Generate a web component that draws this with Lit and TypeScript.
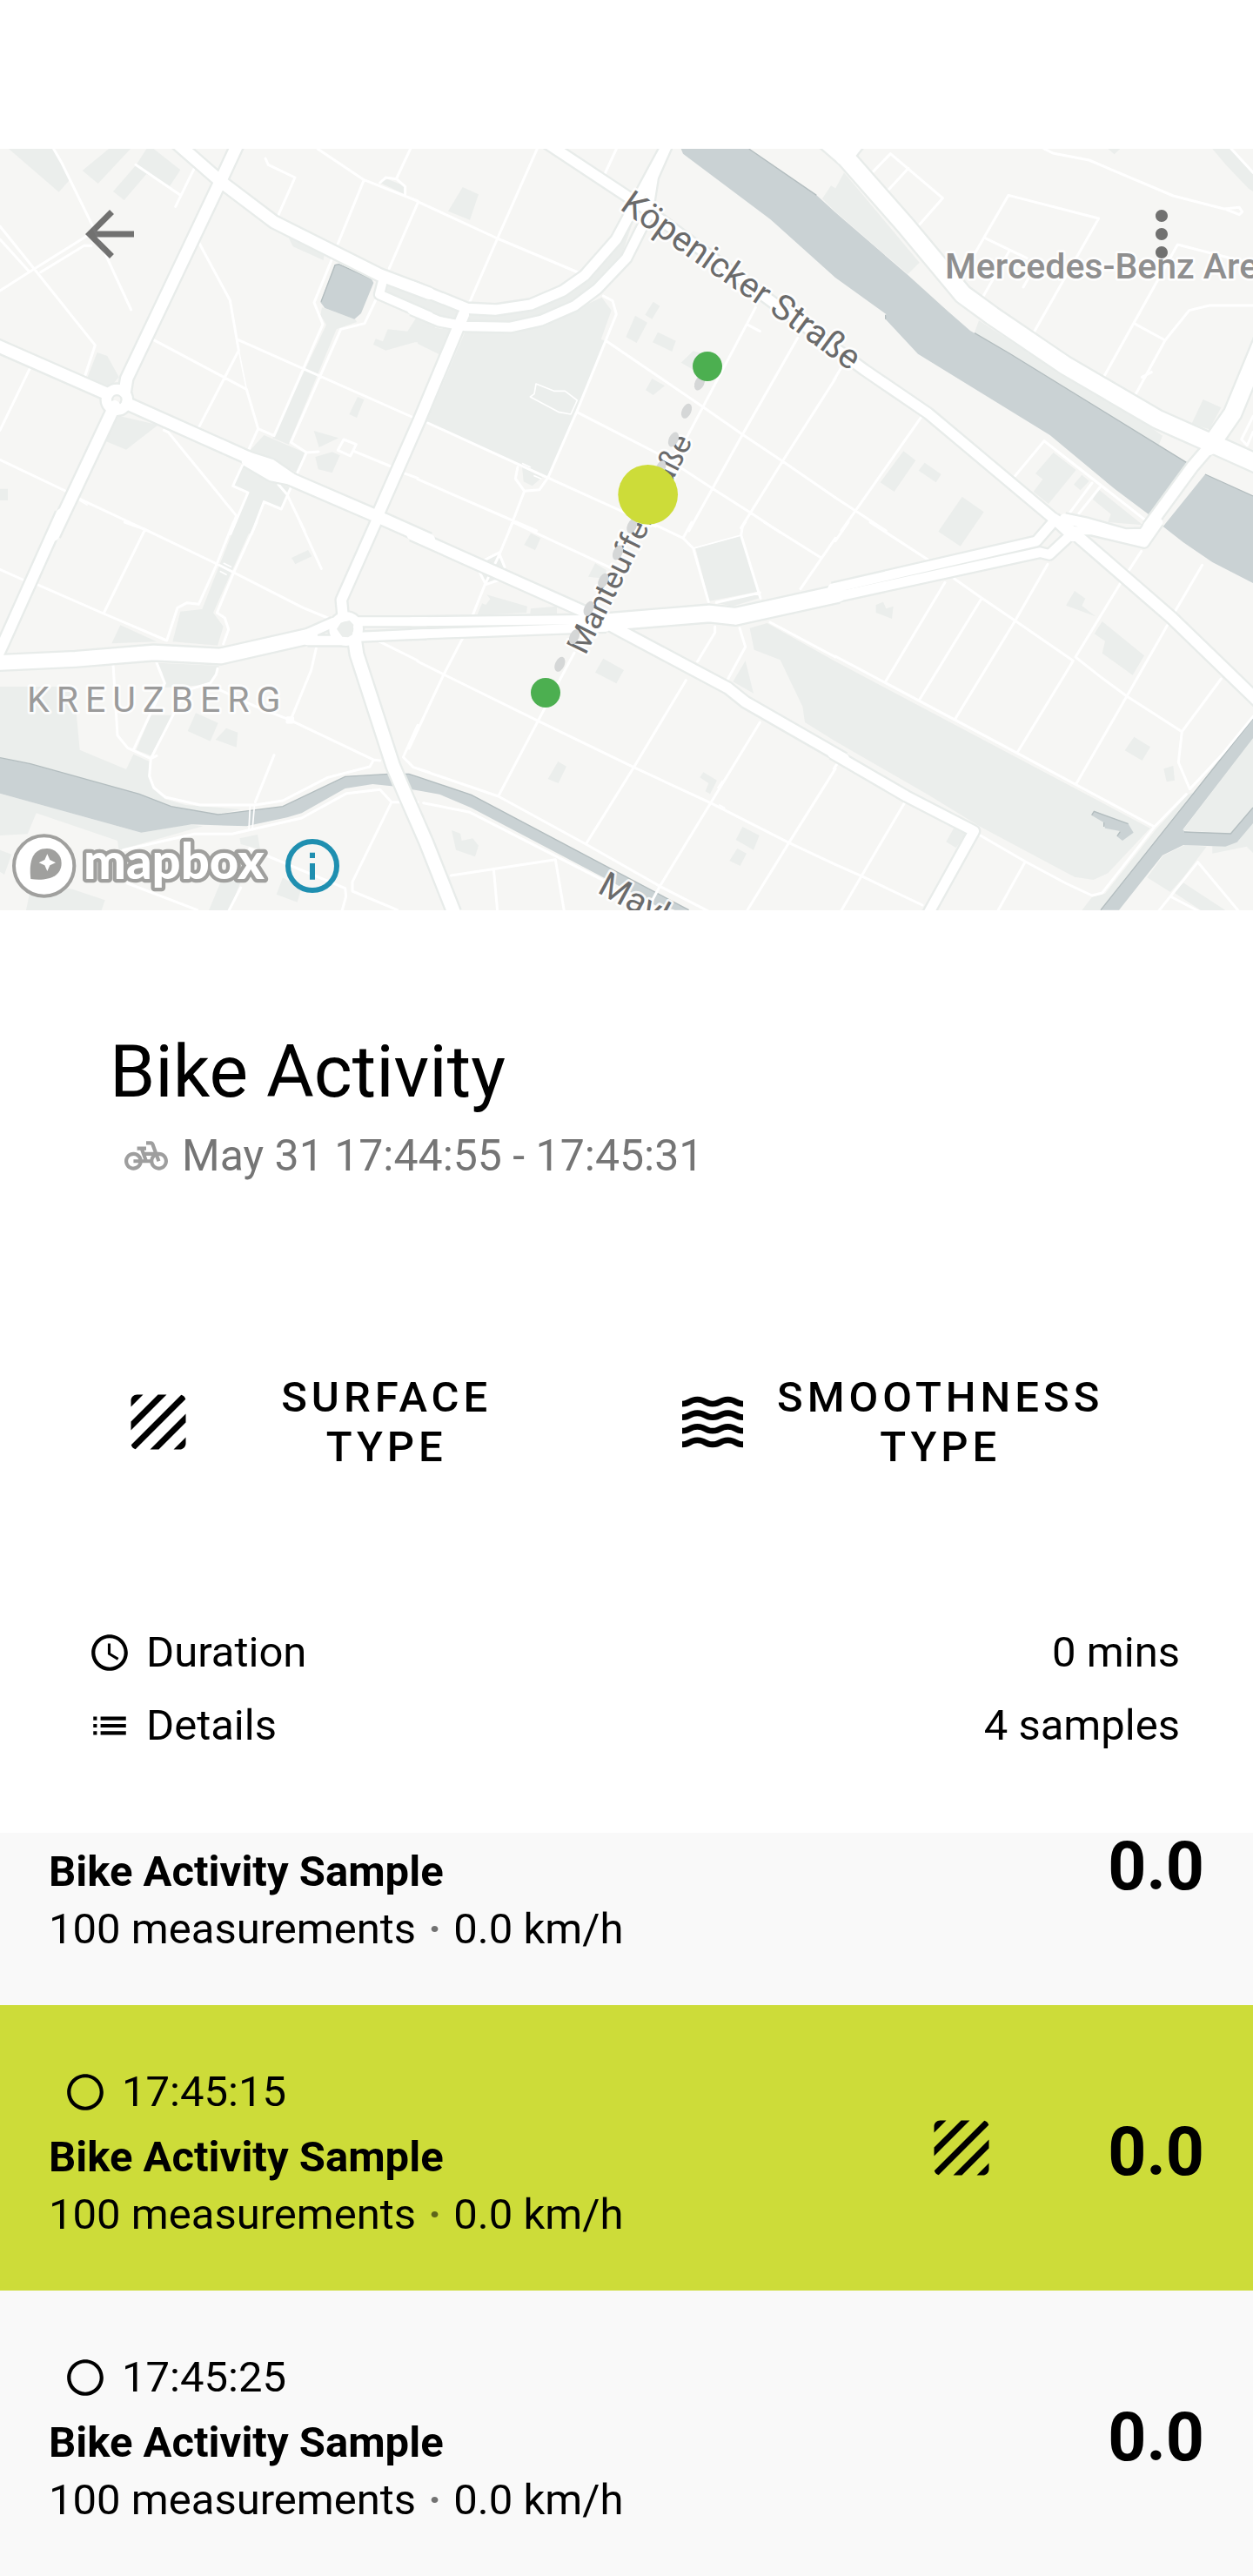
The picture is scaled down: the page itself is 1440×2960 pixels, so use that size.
import { LitElement, html, svg, css, nothing } from "lit";
import { customElement, property } from "lit/decorators.js";

/* ---------- map geometry ---------- */

type Road = [width: number, d: string];

interface Tile {
  x: number;
  y: number;
  parks: string;
  water: string;
  shore: string;
  minor: string;
  thin: string;
  major: Road[];
}

const TILES: Tile[] = [
  {
    x: 0,
    y: -33,
    parks:
      "M30,33 190,33 215,85 240,140 203,182z M375,33 450,33 338,153 284,108z M530,33 622,106 585,162 505,120 428,210 390,180 470,88 505,33z M335,735 370,747 410,820 375,860 300,825z M395,950 545,985 435,1070 350,1035z M995,340 1120,385 1115,417 1010,370z M1110,580 1225,620 1230,630 1160,655 995,1052 940,1030 1125,640 1105,605z M910,1020 1050,1080 1025,1150 940,1105 860,1075z M830,1125 860,1140 940,1180 1000,1200 970,1275 910,1250 865,1360 800,1360 855,1220 805,1195z M1340,490 1460,530 1460,585 1320,530z M1435,615 1500,615 1500,700 1430,700 1330,728 1287,708 1295,688 1320,697 1337,655 1405,662z M1233,888 1255,898 1230,960 1204,948z M1082,1005 1168,1030 1100,1062z M1087,1095 1145,1078 1172,1090 1145,1150 1097,1138z M0,1205 27,1205 27,1245 0,1245z M1310,150 1335,137 1392,160 1392,188z",
    water: "M1155,432 1168,430 1280,480 1288,495 1245,600 1222,620 1120,582 1105,562z",
    shore: "M1107,560 1155,434 1168,431 1280,481",
    minor:
      "M185,33 212,80 320,300 372,415 452,588 M0,300 118,447 328,710 292,818 M0,345 100,455 M0,522 118,447 305,330 M140,458 290,367 315,367 M468,88 622,193 M670,100 605,232 M915,66 925,88 1017,132 958,265 M1095,33 1255,140 1440,213 M1255,140 1165,360 M1415,33 1367,135 M1310,150 1330,132 1367,137 1397,163 1397,190 M1440,220 1342,445 M685,355 793,555 823,728 683,998 M850,862 890,998 945,1022 1113,638 1083,563 1145,412 M530,692 850,862 M822,692 1420,957 M1295,555 1257,635 1175,655 1003,1045 1057,1080 1098,1077 M1057,1080 1025,1150 M1185,1035 1228,1052 1208,1092 1165,1072z M1220,1075 1348,1128 M1390,1150 1440,1168 M890,998 855,1075 M103,790 0,1003 M0,1105 225,1212 M270,1238 510,1350 M565,1003 580,1010 815,1298 795,1350 M835,1125 803,1195 855,1218 795,1360 M1003,1200 970,1275 910,1250 868,1360 M960,1190 990,1225 1050,1350",
    thin: "M823,728 850,862 M275,1245 300,1260",
    major: [
      [40, "M600,5 760,145 945,285 1310,468 1480,532"],
      [30, "M1322,480 1308,535 1480,610"],
      [40, "M825,5 760,145 437,825 430,870"],
      [40, "M-20,707 370,878 M440,912 850,1095 1010,1175 1300,1300 1480,1380"],
      [34, "M850,1093 935,1120 1010,1172 M850,1110 935,1160 1010,1175"],
      [40, "M395,920 185,1365"],
      [34, "M367,898 a36,36 0 1 0 72,0 a36,36 0 1 0 -72,0z"],
    ],
  },
  {
    x: 1440,
    y: -33,
    parks:
      "M155,165 210,190 180,278 105,248z M165,660 320,665 430,640 560,580 635,545 668,590 632,690 650,695 447,1165 30,975z M0,640 125,660 75,742 0,705z M0,525 170,590 390,570 520,510 620,400 700,320 740,290 700,410 600,530 430,625 320,645 150,630 75,610 0,575z M812,560 835,575 808,620 784,605z M750,608 792,632 755,702 718,682z M828,665 890,695 877,732 810,700z M950,730 990,740 960,800 908,770z M808,825 852,850 812,882 786,865z M360,1130 430,1165 395,1195 365,1180z",
    water: "",
    shore: "",
    minor:
      "M412,33 275,342 180,560 M0,215 275,342 560,462 M685,33 645,120 M640,540 672,557 685,603 650,690 548,940 450,1165 420,1208 368,1213 337,1170 345,1130 M650,695 980,920 1120,1018 1258,1110 1440,1235 M548,940 850,1095 1015,1203 1148,1288 1250,1355 M35,978 445,1165 820,1335 M1165,580 985,920 900,1080 M1135,638 1180,662 M1310,685 1120,1018 935,1350 M1440,825 1258,1110 1115,1340 M0,1172 410,1350 M368,1213 315,1350",
    thin: "M408,843 470,868 508,868 550,900 528,948 485,940 388,888 402,878z M362,1118 388,1130 M402,1160 425,1170",
    major: [
      [34, "M440,10 780,235 1540,795 1760,945 2195,1310 2260,1370"],
      [34, "M-20,506 170,583 270,588 390,570 500,523 575,470 685,345 800,130 865,10"],
      [32, "M-20,588 75,628 165,645 320,648 425,625 540,575 620,515 720,410 790,270 812,130 865,10"],
      [38, "M158,605 5,970 -140,1300"],
    ],
  },
  {
    x: 2880,
    y: -33,
    parks:
      "M30,115 290,425 250,465 0,250 0,170z M495,625 780,810 1000,930 1128,1022 1115,1055 600,738 480,665z M1268,897 1330,925 1290,1000 1228,982z M940,33 982,33 962,52z M1300,33 1365,33 1440,120 1440,180 1425,170 1348,90z M-45,205 -15,160 10,175 10,245 0,250z M235,1075 277,1107 203,1215 155,1183z M308,1115 365,1155 347,1183 287,1142z M437,1232 512,1285 431,1403 355,1352z M752,1080 830,1140 735,1257 683,1215 715,1172 690,1152z M850,1157 875,1178 845,1210 822,1190z M905,1205 1060,1330 940,1320 950,1292 888,1242z",
    water:
      "M-532,33 -298,33 -65,193 0,252 250,468 385,590 465,660 600,738 1220,1120 1083,1295 965,1207 740,1020 285,740 173,620 175,603 0,477 -225,275 -525,50z M1275,1155 1440,1230 1440,1530 1300,1458 1200,1390 1130,1335z",
    shore: "M-298,33 -65,193 M480,668 600,738 1220,1120 M1275,1155 1440,1230 M173,605 173,620",
    minor:
      "M130,112 190,50 370,203 285,300 M252,100 180,178 M480,395 597,193 908,273 683,668 M515,340 660,410 M600,385 505,550 M665,480 648,510 M720,33 750,48 875,72 1165,195 1340,240 1393,235 1403,250 1393,260 1350,243 M925,820 1180,363 1440,430 M1030,635 1137,693 M1035,880 1137,693 1220,590 1290,573 1440,573 M1365,33 1440,115 M1440,955 1400,1035 1420,1055 1440,1010 M298,955 70,1280 20,1350 M0,1235 175,1350 M25,780 -5,830 M620,1160 720,1040 1065,1310 M885,1185 810,1285 M912,1200 840,1290 M1057,820 1090,803",
    thin: "",
    major: [
      [60, "M-60,-20 35,62 240,295 440,535 540,608 790,778 1110,965 1290,1045 1480,1130"],
      [60, "M85,-10 30,60"],
      [58, "M1510,605 1370,945 1290,1060"],
      [38, "M1290,1060 1230,1130 1080,1335"],
    ],
  },
  {
    x: 0,
    y: 1287,
    parks:
      "M0,567 255,567 275,785 435,852 460,800 515,825 512,880 530,920 570,955 640,975 830,990 752,1008 590,980 480,937 0,812z M0,935 487,1070 650,1042 700,1048 410,1130 405,1098 125,1003 95,1075 0,1080z M0,1130 40,1145 15,1215 0,1205z M90,1338 110,1240 250,1265 362,1303 350,1338z M415,355 540,412 385,418z M815,0 875,0 735,312 770,360 750,425 595,412 622,308 697,300z M1005,123 1062,96 1075,118 1018,145z M545,485 755,495 745,530 720,560 570,570 560,520z M520,665 595,665 520,805 470,785z M675,658 752,692 725,755 647,720z M780,710 820,725 815,776 743,750z M826,1090 888,1077 897,1128 830,1110z M975,1225 1038,1265 1025,1310 953,1283z M765,1230 830,1240 790,1338 720,1338z",
    water:
      "M0,812 105,833 480,937 590,980 752,1008 975,980 1190,877 1340,868 1410,868 1440,878 1625,940 2375,1337 2290,1337 2080,1225 1625,985 1515,938 1440,925 1350,910 1285,903 1190,918 1040,1003 990,1018 850,1048 660,1042 487,1070 0,935z",
    shore: "M0,812 105,833 480,937 590,980 752,1008 975,980 1190,877 1340,868 1410,868 1440,878 1625,940 2375,1337",
    minor:
      "M430,0 500,25 760,150 1045,295 1130,330 M500,25 357,315 M0,163 78,198 M128,215 357,315 575,408 612,295 645,278 685,283 745,150 805,0 M885,0 805,175 748,312 775,330 788,370 770,420 M1035,0 1108,160 M390,490 405,735 440,778 520,815 515,875 530,915 570,948 690,975 880,975 975,960 1130,880 1275,843 1288,820 M540,485 568,555 460,785 M750,505 745,525 725,555 640,580 520,815 M740,570 880,635 1000,682 1290,820 1310,822 M1090,435 1073,510 1003,680 M990,674 1010,674 1010,690 990,690z M945,803 880,965 M425,1130 670,1075 800,1075 1040,1020 1195,935 1310,922 1350,965 1440,965 M1350,965 1215,1240 1215,1272 1370,1337 M860,1125 1190,1262 1193,1290 1180,1337 M440,1245 680,1337 M830,1260 790,1337 M1440,700 1390,810 1425,845 1480,862 M1305,410 1440,477 M540,805 520,815",
    thin: "M862,980 858,1062 M877,980 870,1062 M772,142 796,154 M760,170 780,181",
    major: [
      [36, "M212,-30 8,425 -20,485"],
      [50, "M-20,485 260,472 530,450 760,462 1070,392"],
      [32, "M1060,385 1150,345 M1060,408 1200,408"],
      [34, "M1305,-20 1177,268 1182,320"],
      [30, "M1230,343 1470,343 M1240,395 1470,385"],
      [44, "M1222,400 1230,455 1355,840 1400,945 1470,1105 1565,1345"],
      [32, "M1151,368 a42,42 0 1 0 84,0 a42,42 0 1 0 -84,0z"],
    ],
  },
  {
    x: 1440,
    y: 1287,
    parks:
      "M958,90 1115,48 1172,240 1005,272z M1030,278 1172,248 1178,262 1085,290z M390,38 424,55 405,97 367,78z M612,142 650,165 650,195 588,188z M238,250 378,290 375,312 205,320 222,280 235,285 250,265z M390,298 480,290 480,315 388,315z M640,470 711,510 685,556 612,518z M1130,478 1158,590 1087,550z M484,825 513,842 485,900 449,885z M985,862 1032,890 1008,937 992,928 1003,900 973,880z M1120,1050 1178,1080 1158,1130 1097,1095z M1102,1125 1134,1142 1112,1185 1075,1167z M117,1062 147,1073 152,1098 190,1090 210,1115 198,1153 132,1130z M232,130 275,115 300,155 260,200 235,210 215,175z",
    water: "",
    shore: "",
    minor:
      "M328,0 280,115 232,215 190,320 M328,0 660,155 M232,130 280,105 300,155 M215,175 235,215 280,200 M155,400 90,525 -30,780 M0,480 90,525 415,685 745,845 1010,968 1280,1105 1440,1180 M540,450 415,685 278,945 M0,850 278,945 580,1110 835,1255 1000,1340 M925,545 745,845 580,1110 M1180,690 1010,968 835,1255 800,1320 M1440,850 1280,1105 1135,1340 M945,0 915,55 M820,10 915,55 950,90 1003,275 M1115,45 1182,262 M1115,45 1120,15 1130,0 M1030,277 1180,243 M1195,0 1390,122 M1440,55 1320,230 M1025,360 1025,380 965,480 M1110,365 1130,430 1070,540 M1215,345 1440,465 M20,968 180,1000 640,1235 M115,1218 475,1163 505,1340 M262,1195 275,1340",
    thin: "M955,89 1115,45 M1050,892 1035,915 M1040,975 1058,985",
    major: [
      [36, "M-20,43 600,320 700,375 1070,572 1130,620 1470,815"],
      [30, "M-20,343 650,335 M-20,386 160,380 650,362"],
      [56, "M640,345 1005,315 1095,325 1450,247"],
    ],
  },
  {
    x: 2880,
    y: 1287,
    parks:
      "M-295,365 -235,348 0,480 1085,1055 940,1210 890,1233 825,1223 500,1050 320,940 0,755 -105,690 -113,635 -190,475 -280,440z M165,275 175,298 200,290 195,333 140,312 140,285z M825,237 862,263 850,288 897,325 795,287z M920,342 1065,460 1025,527 920,452 930,410 893,385z M1030,740 1086,775 1058,822 998,787z M1132,850 1165,840 1170,890 1142,895z M410,1052 455,1078 415,1122 382,1102z M1440,745 1440,985 1363,1073 1198,1062z M1205,1113 1280,1118 1200,1225 1155,1275 1075,1225 1130,1150z M1200,1243 1345,1338 1260,1338 1165,1275z M1385,1103 1440,1036 1440,1140 1418,1118 1300,1142 1300,1116z M1215,940 1235,930 1100,1100 950,1290 915,1338 850,1338 885,1292 930,1280 1105,1060z",
    water:
      "M1440,675 1440,745 1198,1060 1205,1067 1363,1073 1440,983 1440,1038 1385,1103 1345,1118 1200,1113 1128,1148 978,1337 915,1337z M892,996 1010,1040 1028,1070 990,1098 970,1082 982,1065 930,1055 925,1035 883,1010z",
    shore: "M1440,677 915,1337 M1203,1068 1363,1074 1440,984 M884,1010 892,997 1010,1040 M926,1050 926,1035 M972,1082 982,1067",
    minor:
      "M45,0 0,65 M120,0 320,130 M410,195 505,262 620,340 820,478 630,790 M378,208 173,550 M505,262 290,612 M732,145 620,340 412,680 M1055,100 980,215 828,465 910,530 1005,600 1195,722 M1265,148 1170,310 M1145,355 1005,600 830,903 M1330,540 1195,722 1183,828 1222,920 1330,805 1440,670 M0,462 560,760 1100,1050 1210,938 M1100,1050 920,1278 885,1287 795,1245 655,1170 500,1080 M655,1170 560,1340 M240,965 90,1220 20,1340 M5,835 -5,850 M0,1180 90,1220 300,1320 M1250,1172 1115,1340 M1250,1172 1390,1340 M1155,1290 1260,1345",
    thin: "",
    major: [
      [32, "M-10,228 693,66 755,-5"],
      [32, "M-10,260 705,104 738,112 815,40"],
      [38, "M755,-10 820,35 1160,330 1460,620"],
      [34, "M790,-12 870,5 1000,42 1062,40 1110,-25"],
      [28, "M820,30 880,28 1065,72 1115,0"],
      [34, "M-10,797 245,945 478,1065 320,1350"],
    ],
  },
];

const at = (t: Tile) => `translate(${t.x} ${t.y})`;

/** Route dots between the two end stops, as map coordinates. */
const ROUTE: Array<[number, number]> = [
  [2412, 807],
  [2367, 904],
  [2322, 1002],
  [2278, 1100],
  [2179, 1300],
  [2130, 1392],
  [2080, 1489],
  [2030, 1585],
  [1980, 1682],
  [1930, 1777],
];

/* ---------- icons ---------- */

const WAVE =
  "M17 16.99c-1.35 0-2.2.42-2.95.8-.65.33-1.18.6-2.05.6-.9 0-1.4-.25-2.05-.6-.75-.38-1.57-.8-2.95-.8s-2.2.42-2.95.8c-.65.33-1.17.6-2.05.6v1.95c1.35 0 2.2-.42 2.95-.8.65-.33 1.17-.6 2.05-.6s1.4.25 2.05.6c.75.38 1.57.8 2.95.8s2.2-.42 2.95-.8c.65-.33 1.18-.6 2.05-.6.9 0 1.4.25 2.05.6.75.38 1.58.8 2.95.8v-1.95c-.9 0-1.4-.25-2.05-.6-.75-.38-1.6-.8-2.95-.8z";

const ICONS = {
  back: svg`<path d="M20 11H7.83l5.59-5.59L12 4l-8 8 8 8 1.41-1.41L7.83 13H20v-2z"/>`,
  more: svg`<path d="M12 8c1.1 0 2-.9 2-2s-.9-2-2-2-2 .9-2 2 .9 2 2 2zm0 2c-1.1 0-2 .9-2 2s.9 2 2 2 2-.9 2-2-.9-2-2-2zm0 6c-1.1 0-2 .9-2 2s.9 2 2 2 2-.9 2-2-.9-2-2-2z"/>`,
  bike: svg`<path d="M18.18,10l-1.7-4.68C16.19,4.53,15.44,4,14.6,4H12v2h2.6l1.46,4h-4.81l-0.36-1H12V7H7v2h1.75l1.82,5H9.9c-0.44-2.23-2.31-3.88-4.65-3.99C2.45,9.87,0,12.2,0,15c0,2.8,2.2,5,5,5c2.46,0,4.45-1.69,4.9-4h4.2c0.44,2.23,2.31,3.88,4.65,3.99c2.8,0.13,5.25-2.19,5.25-5c0-2.8-2.2-5-5-5H18.18z M7.82,16c-0.4,1.17-1.49,2-2.82,2c-1.68,0-3-1.32-3-3s1.32-3,3-3c1.33,0,2.42,0.83,2.82,2H5v2H7.82z M14.1,14h-1.4l-0.73-2H15C14.56,12.58,14.24,13.25,14.1,14z M19,18c-1.68,0-3-1.32-3-3c0-0.93,0.41-1.73,1.05-2.28l0.96,2.64l1.88-0.68l-0.97-2.67c0.03,0,0.06-0.01,0.08-0.01c1.68,0,3,1.32,3,3S20.68,18,19,18z"/>`,
  texture: svg`<path d="M19.51 3.08L3.08 19.51c.09.34.27.65.51.9.25.24.56.42.9.51L20.93 4.49c-.19-.69-.73-1.23-1.42-1.41zM11.88 3L3 11.88v2.83L14.71 3h-2.83zM5 3c-1.1 0-2 .9-2 2v2l4-4H5zm14 18c.55 0 1.05-.22 1.41-.59.37-.36.59-.86.59-1.41v-2l-4 4h2zm-9.71 0h2.83L21 12.12V9.29L9.29 21z"/>`,
  waves: svg`${[0, -4.45, -8.9, -13.35].map((dy) => svg`<path transform="translate(0 ${dy})" d=${WAVE}/>`)}`,
  clock: svg`<path d="M11.99 2C6.47 2 2 6.48 2 12s4.47 10 9.99 10C17.52 22 22 17.52 22 12S17.52 2 11.99 2zM12 20c-4.42 0-8-3.58-8-8s3.58-8 8-8 8 3.58 8 8-3.58 8-8 8zm.5-13H11v6l5.25 3.15.75-1.23-4.5-2.67z"/>`,
  list: svg`<path d="M3 13h2v-2H3v2zm0 4h2v-2H3v2zm0-8h2V7H3v2zm4 4h14v-2H7v2zm0 4h14v-2H7v2zM7 7v2h14V7H7z"/>`,
  ring: svg`<path d="M12 2C6.48 2 2 6.48 2 12s4.48 10 10 10 10-4.48 10-10S17.52 2 12 2zm0 18c-4.42 0-8-3.58-8-8s3.58-8 8-8 8 3.58 8 8-3.58 8-8 8z"/>`,
};

type IconName = keyof typeof ICONS;

@customElement("app-icon")
export class AppIcon extends LitElement {
  static styles = css`
    :host {
      display: block;
      flex: none;
      width: 50px;
      height: 50px;
    }
    :host([large]) {
      width: 84px;
      height: 84px;
    }
    .glyph {
      display: block;
      width: 100%;
      height: 100%;
      fill: currentColor;
    }
  `;

  @property() name: IconName = "ring";

  render() {
    return html`<svg class="glyph" viewBox="0 0 24 24" aria-hidden="true">${ICONS[this.name]}</svg>`;
  }
}

@customElement("activity-map")
export class ActivityMap extends LitElement {
  static styles = css`
    :host {
      display: block;
      position: relative;
    }
    .map {
      display: block;
      width: 100%;
      aspect-ratio: 1440 / 875;
      background: #f6f6f4;
    }
    .park {
      fill: #ebeeec;
    }
    .water {
      fill: #cad2d4;
    }
    .shore {
      fill: none;
      stroke: #b3bdbf;
      stroke-width: 4;
    }
    .street {
      fill: none;
      stroke: #ffffff;
      stroke-linejoin: round;
      stroke-linecap: round;
    }
    .casing {
      stroke: #e8ecea;
      stroke-linecap: butt;
    }
    .minor {
      stroke-width: 9;
    }
    .thin {
      stroke-width: 5;
    }
    .label {
      font-family: Roboto, "Liberation Sans", sans-serif;
      font-size: 120px;
      fill: #6b6b6b;
      stroke: #ffffff;
      stroke-opacity: 0.85;
      stroke-width: 16;
      stroke-linejoin: round;
      paint-order: stroke;
    }
    .narrow {
      font-size: 108px;
    }
    .place {
      font-size: 123px;
      font-weight: 500;
      fill: #8f8f8f;
    }
    .district {
      font-size: 123px;
      fill: #9b9b9b;
      letter-spacing: 24px;
    }
    .route {
      fill: #d5d7d7;
    }
    .stop {
      fill: #4caf50;
    }
    .current {
      fill: #cddc39;
    }
    .toolbar {
      position: absolute;
      inset: 0 0 auto 0;
      display: flex;
      justify-content: space-between;
      padding: 56px 63px 0 84px;
    }
    .credits {
      position: absolute;
      left: 12px;
      bottom: 12px;
      display: flex;
      align-items: center;
      gap: 16px;
    }
    .tool {
      padding: 0;
      border: 0;
      background: none;
      color: rgba(0, 0, 0, 0.54);
      cursor: pointer;
    }
    .logo {
      display: block;
      width: 300px;
      height: 78px;
    }
    .info {
      display: block;
      width: 62px;
      height: 62px;
    }
    .ink {
      fill: #a0a09e;
    }
    .disc {
      fill: #ffffff;
      stroke: #a0a09e;
      stroke-width: 12;
    }
    .spark {
      fill: #ffffff;
    }
    .wordmark {
      font-family: Lato, "Open Sans", sans-serif;
      font-weight: 900;
      font-size: 174px;
      fill: #ffffff;
      stroke: #a0a09e;
      stroke-width: 26;
      stroke-linejoin: round;
      paint-order: stroke;
    }
    .teal {
      fill: #1f8fb0;
    }
    .teal-ring {
      fill: none;
      stroke: #1f8fb0;
      stroke-width: 18;
    }
  `;

  render() {
    return html`
      <svg class="map" viewBox="0 0 4320 2625" preserveAspectRatio="xMidYMid slice" role="img" aria-label="Map">
        <defs>
          <path id="koepenicker" d="M2134,206 L2425,410 L2680,583 L3120,905" />
          <path id="manteuffel" d="M2018,1748 L2450,884" />
          <path id="maybach" d="M2056,2562 L2200,2640 L2800,2960" />
        </defs>
        ${TILES.map((t) => svg`<path class="park" transform=${at(t)} d=${t.parks} />`)}
        ${TILES.map(
          (t) => svg`<g transform=${at(t)}>
            <path class="water" d=${t.water} /><path class="shore" d=${t.shore} />
          </g>`
        )}
        ${TILES.map(
          (t) => svg`<g transform=${at(t)}>
            <path class="street minor" d=${t.minor} /><path class="street thin" d=${t.thin} />
          </g>`
        )}
        ${TILES.map((t) =>
          t.major.map(([w, d]) => svg`<path class="street casing" transform=${at(t)} d=${d} stroke-width=${w + 14} />`)
        )}
        ${TILES.map((t) =>
          t.major.map(([w, d]) => svg`<path class="street" transform=${at(t)} d=${d} stroke-width=${w} />`)
        )}
        <path class="park" d="M1161,1655 1175,1634 1205,1626 1219,1640 1215,1675 1200,1684 1180,1682z" />
        <text class="label"><textPath href="#koepenicker">Köpenicker Straße</textPath></text>
        <text class="label narrow"><textPath href="#manteuffel">Manteuffelstraße</textPath></text>
        <text class="label"><textPath href="#maybach">Maybachufer</textPath></text>
        <text class="label place" x="3258" y="447">Mercedes-Benz Arena</text>
        <text class="label district" x="93" y="1940">KREUZBERG</text>
        ${ROUTE.map(
          ([x, y]) => svg`<ellipse class="route" rx="16" ry="27" transform="translate(${x} ${y}) rotate(24)" />`
        )}
        <circle class="stop" cx="2439" cy="750" r="51" />
        <circle class="stop" cx="1881" cy="1875" r="51" />
        <circle class="current" cx="2234" cy="1192" r="103" />
      </svg>
      <div class="toolbar">
        <button class="tool" aria-label="Back"><app-icon name="back" large></app-icon></button>
        <button class="tool" aria-label="More options"><app-icon name="more" large></app-icon></button>
      </div>
      <div class="credits">
        <a href="#mapbox" aria-label="mapbox">
          <svg class="logo" viewBox="36 1068 900 234">
            <circle class="disc" cx="152" cy="1185" r="104" />
            <path class="ink" d="M106,1230 C98,1165 115,1125 162,1125 A50,50 0 0 1 212,1175 C212,1222 165,1238 106,1230z" />
            <path
              class="spark"
              d="M163,1144 L172,1164 192,1174 172,1183 163,1203 154,1183 134,1174 154,1164z"
            />
            <text class="wordmark" x="288" y="1230">mapbox</text>
          </svg>
        </a>
        <button class="tool" aria-label="Map information">
          <svg class="info" viewBox="-93 -93 186 186">
            <circle class="teal-ring" r="84" />
            <path class="teal" d="M-9,-46 H9 V-27 H-9z M-9,-9 H9 V47 H-9z" />
          </svg>
        </button>
      </div>
    `;
  }
}

interface Sample {
  time?: string;
  measurements: number;
  speed: string;
  score: string;
  selected?: boolean;
}

const SAMPLES: Sample[] = [
  { measurements: 100, speed: "0.0 km/h", score: "0.0" },
  { time: "17:45:15", measurements: 100, speed: "0.0 km/h", score: "0.0", selected: true },
  { time: "17:45:25", measurements: 100, speed: "0.0 km/h", score: "0.0" },
];

@customElement("app-root")
export class AppRoot extends LitElement {
  static styles = css`
    :host {
      display: flex;
      flex-direction: column;
      min-height: 100vh;
      padding-top: 171px;
      box-sizing: border-box;
      background: #ffffff;
      color: #000000;
      font: 400 49px/58px Roboto, "Liberation Sans", sans-serif;
    }
    .heading {
      padding: 137px 84px 0 126px;
    }
    .title {
      margin: 0 0 18px;
      font-size: 84px;
      line-height: 98px;
      font-weight: 400;
    }
    .period {
      display: flex;
      align-items: center;
      gap: 16px;
      margin: 0;
      padding-left: 17px;
      font-size: 50px;
      color: #757575;
    }
    .bike {
      color: #9e9e9e;
    }
    .actions {
      display: grid;
      grid-template-columns: 1fr 1fr;
      gap: 112px;
      padding: 220px 139px 0 140px;
    }
    .action {
      display: flex;
      align-items: center;
      padding: 0;
      border: 0;
      background: none;
      color: inherit;
      font: 500 49px/57px Roboto, "Liberation Sans", sans-serif;
      letter-spacing: 5px;
      text-transform: uppercase;
      cursor: pointer;
    }
    .action-text {
      flex: 1 1 0;
    }
    .stats {
      margin: 0;
      padding: 166px 84px 81px 101px;
    }
    .stat {
      display: flex;
      align-items: center;
      height: 84px;
    }
    .stat-name {
      flex: 1;
      padding-left: 17px;
    }
    .stat-value {
      margin: 0;
    }
    .samples {
      flex: 1 1 0;
      display: flex;
      flex-direction: column;
      justify-content: flex-end;
      margin: 0;
      padding: 0;
      list-style: none;
      overflow: hidden;
      background: #f9f9f9;
    }
    .sample {
      flex: none;
      display: flex;
      align-items: center;
      gap: 126px;
      min-height: 328px;
      padding: 0 56px;
      box-sizing: border-box;
    }
    .selected {
      background: #cddc39;
    }
    .sample-body {
      flex: 1;
      align-self: flex-end;
      padding-bottom: 58px;
    }
    .sample-time {
      display: flex;
      align-items: center;
      gap: 17px;
      padding-left: 17px;
      margin-bottom: 17px;
    }
    .sample-name {
      margin: 0 0 8px;
      font-size: 49px;
      line-height: 58px;
      font-weight: 700;
    }
    .sample-info {
      margin: 0;
    }
    .dot {
      padding: 0 2px;
      font-weight: 700;
      color: rgba(0, 0, 0, 0.54);
    }
    .score {
      padding-top: 10px;
      font-size: 77px;
      line-height: 58px;
      font-weight: 700;
    }
  `;

  private renderSample(s: Sample) {
    return html`
      <li class="sample ${s.selected ? "selected" : ""}">
        <div class="sample-body">
          ${s.time ? html`<div class="sample-time"><app-icon name="ring"></app-icon><time>${s.time}</time></div>` : nothing}
          <h2 class="sample-name">Bike Activity Sample</h2>
          <p class="sample-info">${s.measurements} measurements <span class="dot">·</span> ${s.speed}</p>
        </div>
        ${s.selected ? html`<app-icon name="texture" large></app-icon>` : nothing}
        <span class="score">${s.score}</span>
      </li>
    `;
  }

  render() {
    return html`
      <activity-map></activity-map>
      <header class="heading">
        <h1 class="title">Bike Activity</h1>
        <p class="period"><app-icon class="bike" name="bike"></app-icon>May 31 17:44:55 - 17:45:31</p>
      </header>
      <div class="actions">
        <button class="action">
          <app-icon name="texture" large></app-icon>
          <span class="action-text">Surface<br />type</span>
        </button>
        <button class="action">
          <app-icon name="waves" large></app-icon>
          <span class="action-text">Smoothness<br />type</span>
        </button>
      </div>
      <dl class="stats">
        <div class="stat">
          <app-icon name="clock"></app-icon>
          <dt class="stat-name">Duration</dt>
          <dd class="stat-value">0 mins</dd>
        </div>
        <div class="stat">
          <app-icon name="list"></app-icon>
          <dt class="stat-name">Details</dt>
          <dd class="stat-value">4 samples</dd>
        </div>
      </dl>
      <ul class="samples">
        ${SAMPLES.map((s) => this.renderSample(s))}
      </ul>
    `;
  }
}
